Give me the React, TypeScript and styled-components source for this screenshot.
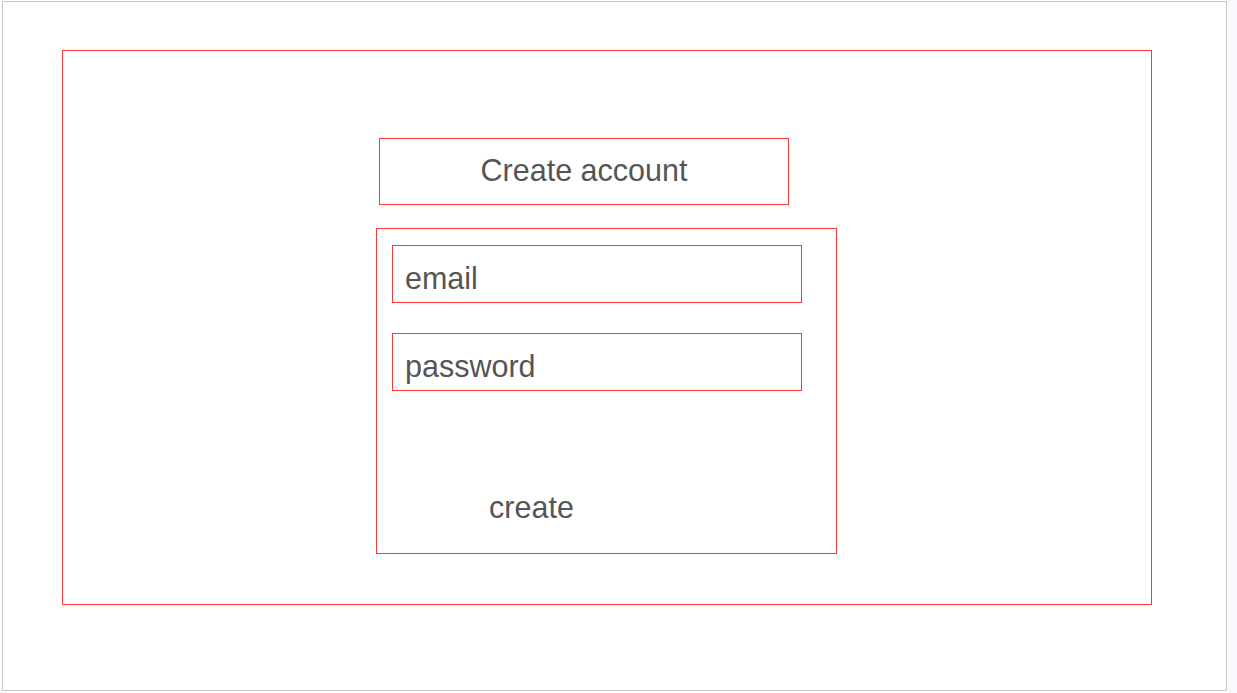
import React from "react";
import styled, { createGlobalStyle } from "styled-components";

const GlobalStyle = createGlobalStyle`
  html, body {
    margin: 0;
    padding: 0;
    background: #f8f9fc;
    font-family: "Liberation Sans", Arial, sans-serif;
  }
  * { box-sizing: border-box; }
`;

const Page = styled.div`
  display: flex;
  height: 693px;
`;

const Canvas = styled.div`
  width: 1227px;
  height: 693px;
  background: #ffffff;
  padding: 1px 0 0 2px;
`;

const Frame = styled.div`
  width: 1225px;
  height: 690px;
  border: 1px solid #c8c8c8;
  padding: 48px 0 0 59px;
`;

const Stage = styled.div`
  width: 1090px;
  height: 555px;
  border: 1px solid #ff3636;
  padding: 87px 0 0 316px;
  display: flex;
  flex-direction: column;
  gap: 23px;
`;

const Title = styled.h1`
  margin: 0;
  width: 410px;
  height: 67px;
  border: 1px solid #ff3636;
  display: flex;
  align-items: center;
  justify-content: center;
  padding-bottom: 2px;
  font-size: 30.5px;
  font-weight: 400;
  color: #555555;
`;

const Form = styled.form`
  margin-left: -3px;
  width: 461px;
  height: 326px;
  border: 1px solid #ff3636;
  padding: 16px 0 0 15px;
  display: flex;
  flex-direction: column;
  align-items: flex-start;
  gap: 30px;
`;

const Field = styled.input`
  width: 410px;
  height: 58px;
  border: 1px solid #ff3636;
  padding: 8px 12px 0 12px;
  font-family: "Liberation Sans", Arial, sans-serif;
  font-size: 30.5px;
  color: #555555;
  background: #ffffff;
  outline: none;
  &::placeholder {
    color: #555555;
    opacity: 1;
  }
`;

const Submit = styled.button`
  margin-top: 69px;
  width: 279px;
  height: 34px;
  padding: 0;
  border: none;
  background: transparent;
  font-family: "Liberation Sans", Arial, sans-serif;
  font-size: 30.5px;
  line-height: 34px;
  color: #555555;
  text-align: center;
  cursor: pointer;
`;

export default function App() {
  return (
    <>
      <GlobalStyle />
      <Page>
        <Canvas>
          <Frame>
            <Stage>
              <Title>Create account</Title>
              <Form onSubmit={(e) => e.preventDefault()}>
                <Field type="email" placeholder="email" />
                <Field type="password" placeholder="password" />
                <Submit type="submit">create</Submit>
              </Form>
            </Stage>
          </Frame>
        </Canvas>
      </Page>
    </>
  );
}
